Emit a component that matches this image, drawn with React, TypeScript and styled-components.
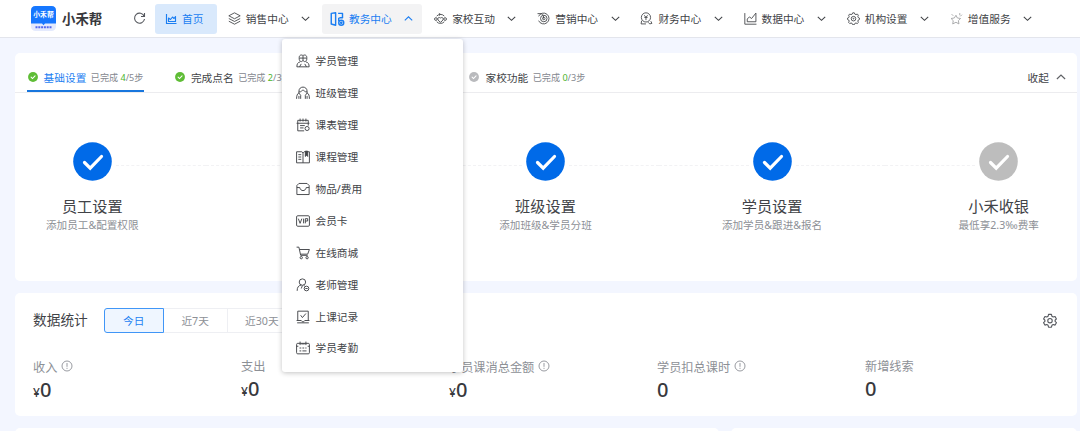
import React from "react";
import styled, { createGlobalStyle } from "styled-components";

const GlobalStyle = createGlobalStyle`
  * { box-sizing: border-box; }
  body {
    margin: 0;
    background: #f3f6ff;
    color: #414347;
    font-family: "Noto Sans", "Noto Sans CJK SC", sans-serif;
    font-size: 10.7px;
    overflow: hidden;
  }
`;

const Page = styled.div`
  height: 431px;
  overflow: hidden;
`;

const Header = styled.header`
  display: flex;
  align-items: center;
  height: 38px;
  padding-left: 31px;
  background: #fff;
  border-bottom: 1px solid #e3e5ec;
`;

const Brand = styled.div`
  display: flex;
  align-items: center;
  gap: 6px;
  width: 102px;
  font-size: 13.4px;
  font-weight: 700;
  color: #38393d;
  white-space: nowrap;

  span { margin-top: -1px; }
`;

const Refresh = styled.div`
  display: flex;
  width: 22px;
`;

const Nav = styled.nav`
  display: flex;
  gap: 2.85px;
`;

const NavItem = styled.div<{ $state?: "home" | "open" }>`
  position: relative;
  display: flex;
  align-items: center;
  width: ${(p) => (p.$state === "home" ? 62 : 100.3)}px;
  height: 30px;
  margin-right: ${(p) => (p.$state === "home" ? -1 : 0)}px;
  padding-left: 8px;
  border-radius: 3px;
  background: ${(p) => (p.$state === "home" ? "#d9e9fc" : p.$state === "open" ? "#f3f3f4" : "transparent")};
  color: ${(p) => (p.$state ? "#1b7ef2" : "#414347")};
`;

const NavIcon = styled.span<{ $muted?: boolean }>`
  display: flex;
  align-items: center;
  justify-content: center;
  width: 15px;
  margin-right: 4px;
  opacity: ${(p) => (p.$muted ? 0.5 : 1)};
`;

const NavLabel = styled.span`
  flex: 1;
  line-height: 16px;
  white-space: nowrap;
`;

const Arrow = styled.span`
  display: flex;
  margin-right: 9px;
`;

const Menu = styled.div`
  position: absolute;
  z-index: 5;
  top: 35px;
  left: -40px;
  width: 181px;
  height: 333px;
  padding-top: 7px;
  background: #fff;
  border-radius: 3px;
  box-shadow: 0 1px 5px rgba(0, 0, 0, 0.24);
  color: #414347;
`;

const MenuItem = styled.div`
  display: flex;
  align-items: center;
  gap: 5px;
  height: 31.9px;
  padding-left: 14.5px;
  line-height: 16px;
`;

const Card = styled.section<{ $height: number }>`
  height: ${(p) => p.$height}px;
  background: #fff;
  border-radius: 5px;
`;

const Content = styled.main`
  display: flex;
  flex-direction: column;
  gap: 12px;
  padding: 15px 3px 0 15px;
`;

const Tabs = styled.div`
  display: flex;
  gap: 30.3px;
  height: 39.5px;
  padding: 0 11px 0 12px;
  border-bottom: 1.5px solid #ececef;
`;

const Tab = styled.div<{ $active?: boolean }>`
  display: flex;
  align-items: center;
  width: 117px;
  height: 39px;
  padding: 11px 0 0 0.6px;
  white-space: nowrap;
  color: ${(p) => (p.$active ? "#1b7ef2" : "#414347")};
  border-bottom: 2px solid ${(p) => (p.$active ? "#1876dd" : "transparent")};
`;

const TabName = styled.span`
  margin: 0 4.5px 0 6px;
`;

const Progress = styled.span`
  font-size: 9.1px;
  color: #85888f;
`;

const Done = styled.span`
  color: #4cb42b;
`;

const Collapse = styled.div`
  display: flex;
  align-items: center;
  gap: 7px;
  height: 39px;
  margin-left: auto;
  padding-top: 9px;
`;

const Steps = styled.div`
  display: grid;
  grid-template-columns: repeat(5, 226.6px);
  margin-left: -36px;
  padding-top: 49.5px;
`;

const Step = styled.div`
  display: flex;
  flex-direction: column;
  align-items: center;
  white-space: nowrap;
`;

const Track = styled.div`
  display: flex;
  align-items: center;
  width: 100%;
  gap: 4px;
`;

const Dash = styled.i<{ $hidden?: boolean }>`
  flex: 1;
  height: 1px;
  margin-top: 7px;
  border-top: 1px dashed ${(p) => (p.$hidden ? "transparent" : "#f2f2f4")};
`;

const StepTitle = styled.div`
  margin-top: 14px;
  font-size: 15.2px;
  line-height: 22px;
`;

const StepNote = styled.div`
  margin-top: 1px;
  font-size: 10.6px;
  line-height: 14px;
  color: #8d9096;
`;

const StatsHead = styled.div`
  display: flex;
  align-items: center;
  height: 26px;
  margin: 0 20px 0 18px;
`;

const StatsCard = styled(Card)`
  padding-top: 14.5px;
`;

const StatsTitle = styled.h2`
  width: 71px;
  margin: -3px 0 0;
  font-size: 13.7px;
  font-weight: 400;
`;

const Range = styled.button<{ $active?: boolean; $width: number }>`
  width: ${(p) => p.$width}px;
  height: 25.5px;
  padding: 0;
  border: 1px solid ${(p) => (p.$active ? "#4096f7" : "#eeeff3")};
  border-left-width: ${(p) => (p.$active ? 1 : 0)}px;
  border-radius: ${(p) => (p.$active ? "3px 0 0 3px" : "0")};
  background: ${(p) => (p.$active ? "#eff6ff" : "#fff")};
  color: ${(p) => (p.$active ? "#1b7ef2" : "#8d9096")};
  font: inherit;
`;

const SettingsSlot = styled.span`
  display: flex;
  margin-left: auto;
`;

const Metrics = styled.div`
  display: grid;
  grid-template-columns: repeat(5, 208px);
  margin: 23.5px 0 0 18px;
`;

const MetricLabel = styled.div<{ $info?: boolean }>`
  display: flex;
  align-items: center;
  gap: 4px;
  height: ${(p) => (p.$info ? 19 : 18)}px;
  padding-top: ${(p) => (p.$info ? 1 : 0)}px;
  font-size: 12.2px;
  color: #8d9096;
  white-space: nowrap;

  svg { margin-top: -3px; }
`;

const MetricValue = styled.div`
  font-size: 20px;
  font-weight: 500;
  line-height: 28px;
  color: #38393d;
`;

const Currency = styled.small`
  font-size: 12px;
`;

const BottomRow = styled.div`
  display: grid;
  grid-template-columns: 704px 1fr;
  gap: 12px;
`;

type IconName =
  | "home" | "layers" | "teach" | "family" | "target" | "finance" | "chart" | "gear" | "star"
  | "students" | "classes" | "calendar" | "book" | "inbox" | "vip" | "cart" | "teacher" | "record" | "attendance";

const gearTeeth = "M9.500 4l1-2.500h3l1 2.500 2 .8 2.500-1 2 2-1 2.500.8 2 2.200 1v2.500l-2.200 1-.8 2 1 2.500-2 2-2.500-1-2 .8-1 2.400h-3l-1-2.400-2-.8-2.500 1-2-2 1-2.500-.8-2-2.200-1v-2.500l2.200-1 .8-2-1-2.500 2-2 2.500 1z";

const shapes: Record<IconName, React.ReactNode> = {
  home: <path d="M3 2v19h20M7 17v-7l4 3 4-5 3 3 3-4v10z" />,
  layers: <path d="M12 1.500l10.500 5.500-10.500 5.500L1.500 7zM1.500 12l10.500 5.500 10.500-5.500M1.500 17l10.500 5.500 10.500-5.500" />,
  teach: (
    <>
      <path d="M2 3l7-1v20l-7-2zM13 3h7v7h-5M14 10v5" />
      <circle cx="18" cy="18" r="4" />
      <path d="M16 18h4M18 16v4" />
    </>
  ),
  family: (
    <>
      <path d="M5 7.500a9.500 9.500 0 0 1 14 0M19 18a9.500 9.500 0 0 1-14 0" />
      <circle cx="3.500" cy="13" r="2.500" />
      <circle cx="20.500" cy="13" r="2.500" />
      <path d="M12 19c-8-5-5-11 0-8 5-3 8 3 0 8zM9 2.500l3 2-3 2" />
    </>
  ),
  target: (
    <>
      <path d="M3 8a10 10 0 1 1 0 8M1 3h7l4 4v5" />
      <circle cx="12.500" cy="12" r="6" />
      <circle cx="12.500" cy="12" r="2.300" />
    </>
  ),
  finance: (
    <>
      <circle cx="11" cy="10" r="8.500" />
      <path d="M8 6l3 4 3-4M8 10h6M11 10v5M3 16l-1 6h9M15 19l3 3 4-1-2-4" />
    </>
  ),
  chart: <path d="M1.500 2v20.500H23M6 18v-5l4-4 4 3 8-10v16z" />,
  gear: (
    <>
      <path d={gearTeeth} />
      <circle cx="12" cy="12.300" r="4.200" />
      <circle cx="12" cy="12.300" r=".8" />
    </>
  ),
  star: <path d="M11 6l2.500 5 6 1-4 4 1 6-5.500-3L5 22l1-6-4-4 6-1zM18 2v4M22 5l-3 3M3 4l3 3" />,
  students: (
    <>
      <path d="M5.500 9V6c0-5 5-5 6.500-3 1.500-2 6.500-2 6.500 3v3c-1 5-5 5-6.500 2-1.500 3-5.500 3-6.500-2zM6 7h12M12 3v8" />
      <path d="M7 13.500c-4 1-5.500 3.500-5.500 8.500h21c0-5-1.500-7.500-5.500-8.500M6 22l3-5M18 22l-3-5" />
    </>
  ),
  classes: (
    <>
      <path d="M5 12V9c0-9.500 14-9.500 14 0v3M5 10c4 1 5-3 7-3s3 4 7 3" />
      <path d="M5 12c-3 1-4 5-4 10M5 12l3 4v6M19 12c3 1 4 5 4 10M19 12l-3 4v6M5 17v5M19 17v5" />
    </>
  ),
  calendar: (
    <>
      <path d="M14 22H3V4h18v9M1 9h22M7 1v5M12 1v5M17 1v5M7 13h8M7 17h6" />
      <circle cx="19" cy="18" r="3.500" />
    </>
  ),
  book: (
    <>
      <path d="M1 3h9l2 2v17H1zM12 5l2-2h9v19H12M4 8h5M4 12h5M4 16h5" />
      <path d="M16 2v9l2-2 2 2V2z" fill="currentColor" />
    </>
  ),
  inbox: <path d="M5 2.500h14l3.500 3.500v15.500h-21V6zM1.500 9.500h5c1 7 10 7 11 0h5" />,
  vip: (
    <>
      <rect x="1" y="3" width="22" height="18" rx="2" />
      <path d="M4 8l3 8 3-8M13 8v8M16 16V8h4v4h-4" />
    </>
  ),
  cart: (
    <>
      <path d="M1 2h4l3 14h12M6 6h17l-3 8H8" />
      <circle cx="9" cy="20" r="2" />
      <circle cx="19" cy="20" r="2" />
    </>
  ),
  teacher: (
    <>
      <circle cx="11" cy="7" r="5.500" />
      <path d="M9 12c-5 1-7 4-7 10M11 13l-2 5M13 12l2 2" />
      <circle cx="18" cy="18" r="4" />
      <path d="M16 18h4" />
    </>
  ),
  record: <path d="M3 18V2h18v16M8 9l3 4 6-7M1 18h8l3 3 3-3h8M2 22h20" />,
  attendance: (
    <>
      <rect x="1" y="4" width="22" height="18" rx="2" />
      <path d="M1 9h3M7 1v6M17 1v6M9 5h6M20 9h3M6 12h3M11 12h3M16 12h2M6 17h3M11 17h7" />
    </>
  ),
};

function Icon({ name, size = 14 }: { name: IconName; size?: number }) {
  return (
    <svg width={size} height={size} viewBox="0 0 24 24" fill="none" stroke="currentColor"
      strokeWidth={name === "teach" || name === "home" ? 2.3 : 1.6} strokeLinejoin="round">
      {shapes[name]}
    </svg>
  );
}

function Chevron({ up, size = 9, color = "currentColor" }: { up?: boolean; size?: number; color?: string }) {
  return (
    <svg width={size} height={size} viewBox="0 0 9 9" fill="none" stroke={color} strokeWidth="1.100">
      <path d={up ? "M.8 6.300L4.500 2.800 8.200 6.300" : "M.8 2.800L4.500 6.300 8.200 2.800"} />
    </svg>
  );
}

function CheckCircle({ size, color }: { size: number; color: string }) {
  return (
    <svg width={size} height={size} viewBox="0 0 39 39">
      <circle cx="19.500" cy="19.500" r="19.300" fill={color} />
      <path d={size < 20 ? "M12 20l5.500 5.500L27.500 15" : "M11.500 20.500l5.700 5.700L28.500 14.500"} fill="none" stroke="#fff"
        strokeWidth={size < 20 ? 4 : 3.2} strokeLinecap="round" />
    </svg>
  );
}

function Logo() {
  return (
    <svg width="25" height="25" viewBox="0 0 25 25">
      <rect width="25" height="25" rx="4.500" fill="#e4eafd" />
      <path d="M0 17.500V4.500Q0 0 4.500 0h16Q25 0 25 4.500v13H14l-1.500 1.700-1.500-1.700z" fill="#1677ff" />
      <text x="12.500" y="11.300" textAnchor="middle" fontSize="6.800" fontWeight="700" fill="#fff">小禾帮</text>
      <path d="M4.500 21.300h16" stroke="#5369ed" strokeWidth="2" strokeDasharray="2 .8" />
    </svg>
  );
}

function Info() {
  return (
    <svg width="12" height="12" viewBox="0 0 12 12" fill="none" stroke="#8d9096" strokeWidth=".9">
      <circle cx="6" cy="6" r="5" />
      <path d="M6 3v3.800M6 7.800v1.100" />
    </svg>
  );
}

const menu: [IconName, string][] = [
  ["students", "学员管理"],
  ["classes", "班级管理"],
  ["calendar", "课表管理"],
  ["book", "课程管理"],
  ["inbox", "物品/费用"],
  ["vip", "会员卡"],
  ["cart", "在线商城"],
  ["teacher", "老师管理"],
  ["record", "上课记录"],
  ["attendance", "学员考勤"],
];

const nav: [IconName, string][] = [
  ["layers", "销售中心"],
  ["teach", "教务中心"],
  ["family", "家校互动"],
  ["target", "营销中心"],
  ["finance", "财务中心"],
  ["chart", "数据中心"],
  ["gear", "机构设置"],
  ["star", "增值服务"],
];

const tabs = [
  { name: "基础设置", done: 4, total: 5, complete: true },
  { name: "完成点名", done: 2, total: 3, complete: true },
  { name: "", done: 0, total: 0, complete: false },
  { name: "家校功能", done: 0, total: 3, complete: false },
];

const steps = [
  ["员工设置", "添加员工&配置权限"],
  ["", ""],
  ["班级设置", "添加班级&学员分班"],
  ["学员设置", "添加学员&跟进&报名"],
  ["小禾收银", "最低享2.3‰费率"],
];

const metrics = [
  { label: "收入", info: true, money: true },
  { label: "支出", info: false, money: true },
  { label: "学员课消总金额", info: true, money: true },
  { label: "学员扣总课时", info: true, money: false },
  { label: "新增线索", info: false, money: false },
];

export default function App() {
  return (
    <Page>
      <GlobalStyle />
      <Header>
        <Brand><Logo /><span>小禾帮</span></Brand>
        <Refresh>
          <svg width="13" height="13" viewBox="0 0 13 13" fill="none" stroke="#55585e" strokeWidth="1.100">
            <path d="M11.200 4.300A5 5 0 1 0 11.500 7M11.500 1v3.500H8" />
          </svg>
        </Refresh>
        <Nav>
          <NavItem $state="home">
            <NavIcon><Icon name="home" size={12} /></NavIcon>
            <NavLabel>首页</NavLabel>
          </NavItem>
          {nav.map(([icon, label]) => {
            const open = icon === "teach";
            return (
              <NavItem key={label} $state={open ? "open" : undefined}>
                <NavIcon $muted={icon === "star"}><Icon name={icon} size={open ? 16 : 13} /></NavIcon>
                <NavLabel>{label}</NavLabel>
                <Arrow><Chevron up={open} /></Arrow>
                {open && (
                  <Menu>
                    {menu.map(([itemIcon, text]) => (
                      <MenuItem key={text}><Icon name={itemIcon} />{text}</MenuItem>
                    ))}
                  </Menu>
                )}
              </NavItem>
            );
          })}
        </Nav>
      </Header>
      <Content>
        <Card $height={228}>
          <Tabs>
            {tabs.map((t, i) => (
              <Tab key={i} $active={i === 0}>
                {t.name && (
                  <>
                    <CheckCircle size={10} color={t.complete ? "#5fbd36" : "#b9babd"} />
                    <TabName>{t.name}</TabName>
                    <Progress>已完成 <Done>{t.done}</Done>/{t.total}步</Progress>
                  </>
                )}
              </Tab>
            ))}
            <Collapse>收起<Chevron up size={10} color="#606266" /></Collapse>
          </Tabs>
          <Steps>
            {steps.map(([title, note], i) => (
              <Step key={i}>
                <Track>
                  <Dash $hidden={i === 0} />
                  <CheckCircle size={39} color={i === 4 ? "#bdbdbd" : "#006ae8"} />
                  <Dash $hidden={i === 4} />
                </Track>
                <StepTitle>{title}</StepTitle>
                <StepNote>{note}</StepNote>
              </Step>
            ))}
          </Steps>
        </Card>
        <StatsCard $height={123}>
          <StatsHead>
            <StatsTitle>数据统计</StatsTitle>
            <Range $active $width={59.5}>今日</Range>
            <Range $width={64.3}>近7天</Range>
            <Range $width={69}>近30天</Range>
            <SettingsSlot>
              <svg width="14" height="15" viewBox="0 0 24 24" fill="none" stroke="#55585e" strokeWidth="1.900" strokeLinejoin="round">
                <path d="M9.500 1.500h5l.8 3.300 2.200 1.300 3.200-1 2.300 4.200-2.300 2.300v1.800l2.300 2.300-2.300 4.200-3.200-1-2.200 1.300-.8 3.300h-5l-.8-3.300-2.200-1.300-3.200 1L1 15.700l2.300-2.300v-1.800L1 9.300l2.300-4.200 3.200 1 2.200-1.300z" />
                <circle cx="12" cy="12.300" r="3.800" />
              </svg>
            </SettingsSlot>
          </StatsHead>
          <Metrics>
            {metrics.map((m) => (
              <div key={m.label}>
                <MetricLabel $info={m.info}>{m.label}{m.info && <Info />}</MetricLabel>
                <MetricValue>{m.money && <Currency>¥</Currency>}0</MetricValue>
              </div>
            ))}
          </Metrics>
        </StatsCard>
        <BottomRow>
          <Card $height={40} />
          <Card $height={40} />
        </BottomRow>
      </Content>
    </Page>
  );
}
